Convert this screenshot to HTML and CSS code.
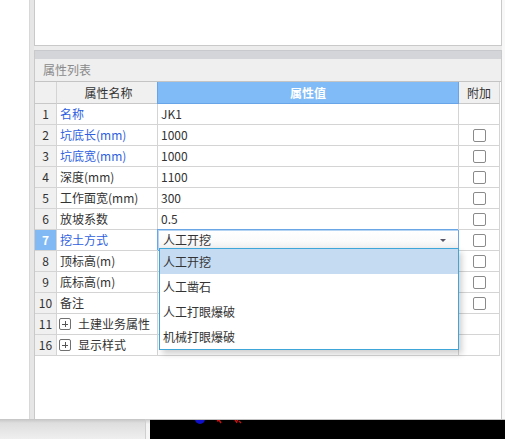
FILE: index.html
```html
<!DOCTYPE html>
<html lang="zh">
<head>
<meta charset="utf-8">
<title>属性列表</title>
<link rel="stylesheet" href="styles.css">
</head>
<body>
<div class="app">
  <div class="main">
    <div class="leftpane"></div>
    <div class="splitter"></div>
    <div class="panel">
      <div class="topbox"></div>
      <div class="gap"></div>
      <div class="section">
        <div class="bar"></div>
        <div class="title">属性列表</div>
        <div class="grid">
          <div class="h num"></div>
          <div class="h name">属性名称</div>
          <div class="h val">属性值</div>
          <div class="h add">附加</div>

          <div class="c num">1</div>
          <div class="c name blue">名称</div>
          <div class="c value">JK1</div>
          <div class="c add"></div>

          <div class="c num">2</div>
          <div class="c name blue">坑底长(mm)</div>
          <div class="c value">1000</div>
          <div class="c add"><span class="chk"></span></div>

          <div class="c num">3</div>
          <div class="c name blue">坑底宽(mm)</div>
          <div class="c value">1000</div>
          <div class="c add"><span class="chk"></span></div>

          <div class="c num">4</div>
          <div class="c name">深度(mm)</div>
          <div class="c value">1100</div>
          <div class="c add"><span class="chk"></span></div>

          <div class="c num">5</div>
          <div class="c name">工作面宽(mm)</div>
          <div class="c value">300</div>
          <div class="c add"><span class="chk"></span></div>

          <div class="c num">6</div>
          <div class="c name">放坡系数</div>
          <div class="c value">0.5</div>
          <div class="c add"><span class="chk"></span></div>

          <div class="c num sel">7</div>
          <div class="c name blue">挖土方式</div>
          <div class="c value combo">
            <span class="combo-text">人工开挖</span>
            <span class="arrow"></span>
            <div class="list">
              <div class="item hi">人工开挖</div>
              <div class="item">人工凿石</div>
              <div class="item">人工打眼爆破</div>
              <div class="item">机械打眼爆破</div>
            </div>
          </div>
          <div class="c add"><span class="chk"></span></div>

          <div class="c num">8</div>
          <div class="c name">顶标高(m)</div>
          <div class="c value"></div>
          <div class="c add"><span class="chk"></span></div>

          <div class="c num">9</div>
          <div class="c name">底标高(m)</div>
          <div class="c value"></div>
          <div class="c add"><span class="chk"></span></div>

          <div class="c num">10</div>
          <div class="c name">备注</div>
          <div class="c value"></div>
          <div class="c add"><span class="chk"></span></div>

          <div class="c num">11</div>
          <div class="c name group"><span class="plus"></span>土建业务属性</div>
          <div class="c value"></div>
          <div class="c add"></div>

          <div class="c num">16</div>
          <div class="c name group"><span class="plus"></span>显示样式</div>
          <div class="c value"></div>
          <div class="c add"></div>
        </div>
      </div>
    </div>
    <div class="rightgap"></div>
  </div>
  <div class="bottom">
    <div class="bottomleft"></div>
    <div class="bsep"></div>
    <div class="canvas">
      <svg class="marks" width="60" height="18" viewBox="0 0 60 18">
        <circle cx="10" cy="-1" r="5" fill="#1010c8"/>
        <path d="M27 1 L30 0 M29 0 L31 3" stroke="#d01010" stroke-width="1.5" fill="none"/>
        <path d="M45 0 L47 3 M48 0 L46 2 M49 1 L51 3" stroke="#d01010" stroke-width="1.3" fill="none"/>
      </svg>
    </div>
  </div>
</div>
</body>
</html>
```
FILE: styles.css
```css
* { box-sizing: border-box; }
html, body {
  margin: 0;
  padding: 0;
  width: 505px;
  height: 439px;
  overflow: hidden;
  background: #ffffff;
  font-family: "Noto Sans CJK SC", "Noto Sans", sans-serif;
  font-size: 12px;
  color: #333333;
}
.app {
  display: flex;
  flex-direction: column;
  height: 439px;
}
.main {
  display: flex;
  height: 419px;
}
.leftpane {
  width: 29px;
  background: #ffffff;
}
.splitter {
  width: 5px;
  background: #e6e6e6;
  border-left: 1px solid #d8d8d8;
}
.panel {
  width: 468px;
  display: flex;
  flex-direction: column;
  background: #ececec;
}
.rightgap {
  flex: 1;
  background: #f8f8f8;
}
.topbox {
  height: 46px;
  background: #ffffff;
  border: 1px solid #c9c9c9;
  border-top: none;
}
.gap { height: 4px; }
.section {
  flex: 1;
  display: flex;
  flex-direction: column;
  background: #ffffff;
  border-left: 1px solid #c9c9c9;
  border-right: 1px solid #c9c9c9;
}
.bar {
  height: 9px;
  background: #d3d5d9;
  border-top: 1px solid #c8c9cd;
}
.title {
  height: 23px;
  line-height: 22px;
  padding-left: 8px;
  background: #efefef;
  border-bottom: 1px solid #c4c4c4;
  color: #8a8a8a;
}
.grid {
  display: grid;
  grid-template-columns: 22px 101px 301px 41px;
  grid-auto-rows: 21px;
  grid-template-rows: 22px;
  width: 465px;
}
.h, .c {
  border-right: 1px solid #d4d4d4;
  border-bottom: 1px solid #d4d4d4;
  display: flex;
  align-items: center;
  line-height: 20px;
  white-space: nowrap;
}
.h {
  background: #f0f0f0;
  justify-content: center;
  border-bottom-color: #c8c8c8;
}
.h.val {
  background: #80bbf7;
  color: #ffffff;
  font-weight: bold;
  border-right-color: #68a4e8;
  border-bottom-color: #68a4e8;
  box-shadow: -1px 0 0 #68a4e8;
}
.h.add { color: #333333; }
.num {
  background: #f0f0f0;
  justify-content: center;
  color: #333333;
}
.num.sel {
  background: #80b9f4;
  color: #ffffff;
  font-weight: bold;
}
.name { padding-left: 3px; }
.name.blue { color: #2f5fe0; }
.value { padding-left: 3px; }
.add { justify-content: center; }
.chk {
  width: 13px;
  height: 13px;
  border: 1.3px solid #8a8a8a;
  border-radius: 2px;
  background: #ffffff;
}
.group { padding-left: 2px; }
.plus {
  width: 12px;
  height: 12px;
  border: 1px solid #707070;
  border-radius: 2px;
  margin-right: 7px;
  position: relative;
  flex: none;
}
.plus::before, .plus::after {
  content: "";
  position: absolute;
  background: #555555;
}
.plus::before { left: 2px; right: 2px; top: 4.5px; height: 1px; }
.plus::after { top: 2px; bottom: 2px; left: 4.5px; width: 1px; }
.combo {
  position: relative;
  padding-left: 5px;
  background: linear-gradient(#ffffff 0%, #fbfbfb 55%, #ececec 100%);
  border-right-color: #6aa6e6;
  border-bottom-color: #6aa6e6;
  box-shadow: -1px -1px 0 #6aa6e6, inset 1px 1px 0 #b5d3f3;
}
.combo-text { flex: 1; }
.arrow {
  width: 0;
  height: 0;
  border-left: 3px solid transparent;
  border-right: 3px solid transparent;
  border-top: 3px solid #555566;
  margin-right: 12px;
}
.list {
  position: absolute;
  top: 18px;
  left: 1px;
  width: 300px;
  height: 102px;
  background: #ffffff;
  border: 1px solid #3ea6d8;
  box-shadow: 3px 4px 6px rgba(0, 0, 0, 0.18);
  z-index: 5;
}
.item {
  height: 25px;
  line-height: 25px;
  padding-left: 3px;
  color: #333333;
}
.item.hi { background: #c4dbf2; }
.bottom {
  display: flex;
  height: 20px;
}
.bottomleft {
  width: 146px;
  background: linear-gradient(#c4c4c4 0%, #dedede 20%, #efefef 100%);
  border-right: 1px solid #cfcfcf;
}
.bsep {
  width: 4px;
  background: linear-gradient(#c8c8c8 0%, #f4f4f4 25%, #f6f6f6 100%);
}
.canvas {
  flex: 1;
  background: #000000;
  border-top: 1px solid #c4c4c4;
  padding-left: 40px;
}
.marks { display: block; }
```
